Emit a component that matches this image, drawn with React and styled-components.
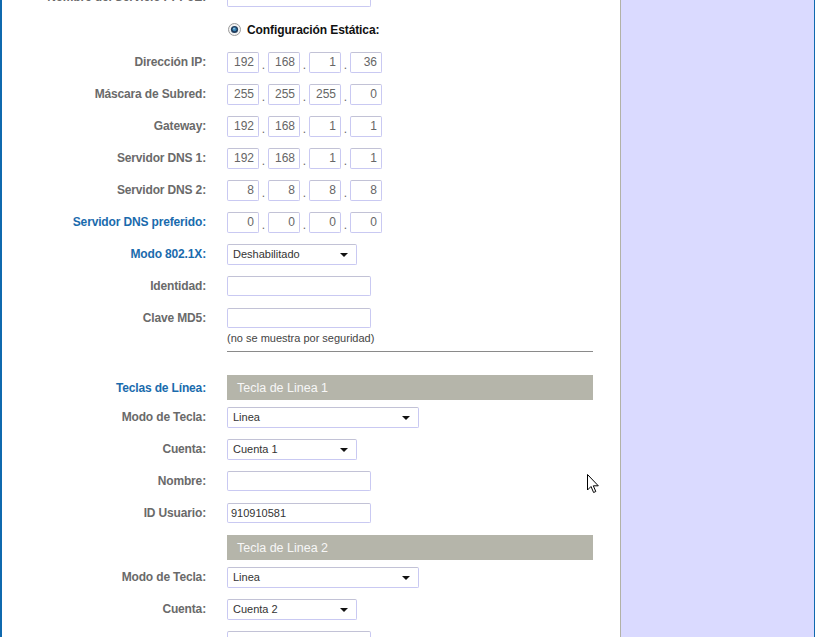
import React from "react";
import styled, { createGlobalStyle } from "styled-components";

const Global = createGlobalStyle`
  html, body { margin: 0; padding: 0; background: #fff; }
  body { font-family: "Liberation Sans", Arial, sans-serif; overflow: hidden; }
`;

const Page = styled.div`
  position: relative;
  display: flex;
  width: 815px;
  height: 637px;
  overflow: hidden;
`;

const Main = styled.div`
  flex: 0 0 618px;
  background: #fff;
  border-left: 2px solid #0f69ae;
  border-right: 1px solid #b2b2a6;
  overflow: hidden;
`;

const Sidebar = styled.div`
  flex: 1;
  background: #dadaff;
  border-right: 1px solid #0f69ae;
`;

const Form = styled.div`
  display: grid;
  grid-template-columns: 204px 366px;
  column-gap: 21px;
  margin-top: -19px;
`;

const Label = styled.div`
  grid-column: 1;
  text-align: right;
  font-size: 12px;
  font-weight: bold;
  letter-spacing: -0.15px;
  color: ${(p) => (p.$blue ? "#1a6bad" : "#6a6a6a")};
  align-self: center;
  white-space: nowrap;
`;

const Field = styled.div`
  grid-column: 2;
  height: ${(p) => p.$h || 32}px;
  display: flex;
  align-items: center;
`;

const TextInput = styled.div`
  box-sizing: border-box;
  width: 144px;
  height: 20px;
  border: 1px solid #c9c9f2;
  border-top-color: #c2c2d6;
  border-radius: 2px;
  font-size: 11px;
  color: #333;
  padding-left: 3px;
  display: flex;
  align-items: center;
`;

const IpGroup = styled.div`
  display: flex;
  align-items: center;
`;

const IpBox = styled.div`
  box-sizing: border-box;
  width: 32px;
  height: 21px;
  border: 1px solid #c9c9f2;
  border-top-color: #c2c2d6;
  border-radius: 2px;
  font-size: 12px;
  color: #666;
  text-align: right;
  padding-right: 4px;
  line-height: 19px;
`;

const Dot = styled.span`
  width: 9px;
  text-align: center;
  font-size: 12px;
  color: #666;
  padding-top: 6px;
`;

const Select = styled.div`
  box-sizing: border-box;
  width: ${(p) => p.$w}px;
  height: 21px;
  border: 1px solid #c9c9f2;
  border-top-color: #c2c2d6;
  border-radius: 2px;
  font-size: 11px;
  color: #333;
  padding: 0 8px 0 5px;
  display: flex;
  align-items: center;
  justify-content: space-between;
`;

const Arrow = styled.span`
  width: 0;
  height: 0;
  border-left: 4px solid transparent;
  border-right: 4px solid transparent;
  border-top: 4px solid #111;
  margin-top: 2px;
`;

const RadioLabel = styled.div`
  display: flex;
  align-items: center;
  gap: 6px;
  font-size: 12px;
  font-weight: bold;
  letter-spacing: -0.1px;
  color: #111;
  padding-left: 1px;
`;

const Note = styled.div`
  grid-column: 2;
  font-size: 11px;
  color: #444;
  margin-top: -3px;
  line-height: 14px;
`;

const Divider = styled.div`
  grid-column: 2;
  border-top: 1px solid #8a8a8a;
  margin: 6px 0 23px;
`;

const HeaderBar = styled.div`
  grid-column: 2;
  height: 25px;
  background: #b5b5aa;
  color: #f7f7f7;
  font-size: 12.5px;
  padding-left: 10px;
  display: flex;
  align-items: center;
  margin-top: ${(p) => p.$mt || 0}px;
  margin-bottom: 1px;
`;

const Cursor = styled.svg`
  position: absolute;
  left: 587px;
  top: 474px;
`;

const Radio = () => (
  <svg width="13" height="13" viewBox="0 0 13 13">
    <circle cx="6.5" cy="6.5" r="6" fill="#f2f2f2" stroke="#9a9a9a" strokeWidth="1" />
    <circle cx="6.5" cy="6.5" r="3.6" fill="#1f3c5c" />
    <circle cx="6.5" cy="6.3" r="2" fill="#3a86b8" />
    <circle cx="6" cy="5.6" r="0.9" fill="#9fd0ec" />
  </svg>
);

const Ip = ({ v }) => (
  <IpGroup>
    {v.map((x, i) => (
      <React.Fragment key={i}>
        {i > 0 && <Dot>.</Dot>}
        <IpBox>{x}</IpBox>
      </React.Fragment>
    ))}
  </IpGroup>
);

const Row = ({ label, blue, children }) => (
  <>
    <Label $blue={blue}>{label}</Label>
    <Field>{children}</Field>
  </>
);

export default function App() {
  return (
    <>
      <Global />
      <Page>
        <Main>
          <Form>
            <Row label="Nombre del Servicio PPPoE:">
              <TextInput />
            </Row>
            <Field $h={33}>
              <RadioLabel>
                <Radio />
                Configuración Estática:
              </RadioLabel>
            </Field>
            <Row label="Dirección IP:">
              <Ip v={["192", "168", "1", "36"]} />
            </Row>
            <Row label="Máscara de Subred:">
              <Ip v={["255", "255", "255", "0"]} />
            </Row>
            <Row label="Gateway:">
              <Ip v={["192", "168", "1", "1"]} />
            </Row>
            <Row label="Servidor DNS 1:">
              <Ip v={["192", "168", "1", "1"]} />
            </Row>
            <Row label="Servidor DNS 2:">
              <Ip v={["8", "8", "8", "8"]} />
            </Row>
            <Row label="Servidor DNS preferido:" blue>
              <Ip v={["0", "0", "0", "0"]} />
            </Row>
            <Row label="Modo 802.1X:" blue>
              <Select $w={130}>
                Deshabilitado <Arrow />
              </Select>
            </Row>
            <Row label="Identidad:">
              <TextInput />
            </Row>
            <Row label="Clave MD5:">
              <TextInput />
            </Row>
            <Note>(no se muestra por seguridad)</Note>
            <Divider />
            <Label $blue>Teclas de Línea:</Label>
            <HeaderBar>Tecla de Linea 1</HeaderBar>
            <Row label="Modo de Tecla:">
              <Select $w={192}>
                Linea <Arrow />
              </Select>
            </Row>
            <Row label="Cuenta:">
              <Select $w={130}>
                Cuenta 1 <Arrow />
              </Select>
            </Row>
            <Row label="Nombre:">
              <TextInput />
            </Row>
            <Row label="ID Usuario:">
              <TextInput>910910581</TextInput>
            </Row>
            <HeaderBar $mt={6}>Tecla de Linea 2</HeaderBar>
            <Row label="Modo de Tecla:">
              <Select $w={192}>
                Linea <Arrow />
              </Select>
            </Row>
            <Row label="Cuenta:">
              <Select $w={130}>
                Cuenta 2 <Arrow />
              </Select>
            </Row>
            <Row label="">
              <TextInput />
            </Row>
          </Form>
        </Main>
        <Sidebar />
        <Cursor width="13" height="20" viewBox="0 0 13 20">
          <path
            d="M0.5 0.5 L0.5 16 L4 12.5 L6.6 18.5 L8.8 17.5 L6.3 11.8 L11.3 11.8 Z"
            fill="#fff"
            stroke="#000"
            strokeWidth="1"
            strokeLinejoin="miter"
          />
        </Cursor>
      </Page>
    </>
  );
}
